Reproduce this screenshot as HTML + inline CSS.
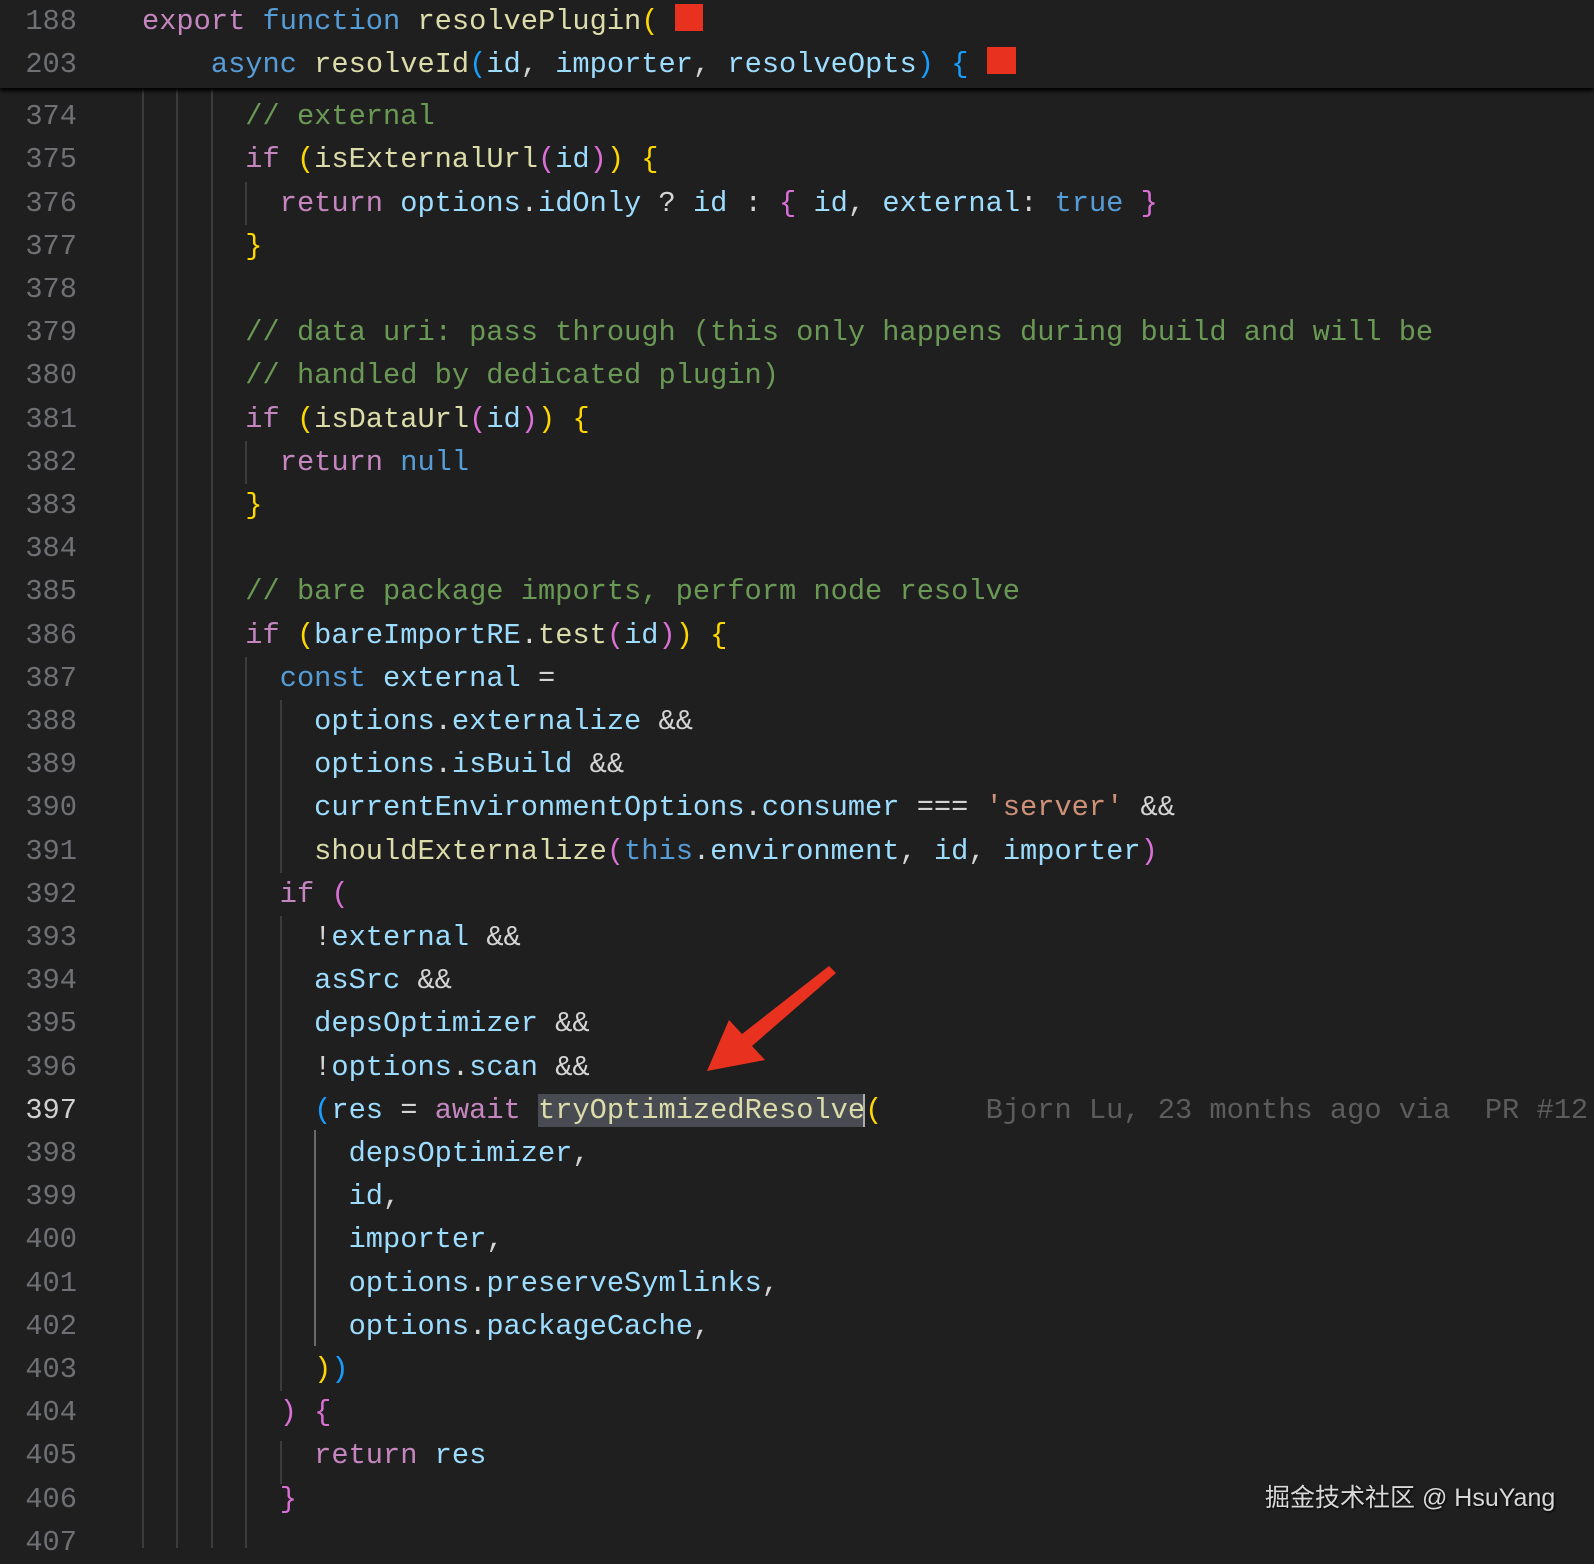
<!DOCTYPE html>
<html><head><meta charset="utf-8"><style>
html,body{margin:0;padding:0;background:#1f1f1f;}
body{width:1594px;height:1548px;position:relative;overflow:hidden;font-family:"Liberation Mono",monospace;font-size:28.7px;}
.l{position:absolute;left:0;height:43.2px;line-height:43.2px;white-space:pre;color:#d4d4d4;}
.n{position:absolute;left:0;width:77px;text-align:right;color:#6e7074;}
.c{position:absolute;left:142px;}
.g{position:absolute;width:2px;background:#3c3c3c;}
.k{color:#c586c0}.b{color:#569cd6}.f{color:#dcdcaa}.v{color:#9cdcfe}.m{color:#6a9955}.s{color:#ce9178}
.y{color:#ffd700}.p{color:#da70d6}.q{color:#179fff}
.hdr{position:absolute;left:0;top:0;width:1594px;height:88px;background:#1f1f1f;box-shadow:0 3px 4px #000;z-index:2;}
.hl{background:#484c52;}
</style></head><body>
<div class="hdr">
<div class="l" style="top:0px"><span class="n">188</span><span class="c"><span class="k">export</span> <span class="b">function</span> <span class="f">resolvePlugin</span><span class="y">(</span></span></div>
<div class="l" style="top:43px"><span class="n">203</span><span class="c">    <span class="b">async</span> <span class="f">resolveId</span><span class="q">(</span><span class="v">id</span>, <span class="v">importer</span>, <span class="v">resolveOpts</span><span class="q">)</span> <span class="q">{</span></span></div>
<div style="position:absolute;left:675px;top:4px;width:28px;height:27px;background:#e8321f"></div>
<div style="position:absolute;left:987px;top:47px;width:29px;height:27px;background:#e8321f"></div>
</div>

<div class="g" style="left:142px;top:88px;height:1460px"></div>
<div class="g" style="left:176px;top:88px;height:1460px"></div>
<div class="g" style="left:211px;top:88px;height:1460px"></div>
<div class="g" style="left:245px;top:182px;height:43px"></div>
<div class="g" style="left:245px;top:441px;height:43px"></div>
<div class="g" style="left:245px;top:657px;height:891px"></div>
<div class="g" style="left:280px;top:700px;height:173px"></div>
<div class="g" style="left:280px;top:916px;height:475px"></div>
<div class="g" style="left:280px;top:1441px;height:43px"></div>
<div class="g" style="left:314px;top:1130px;height:216px;background:#6a6a6a"></div>

<div class="l" style="top:95px"><span class="n">374</span><span class="c">      <span class="m">// external</span></span></div>
<div class="l" style="top:138px"><span class="n">375</span><span class="c">      <span class="k">if</span> <span class="y">(</span><span class="f">isExternalUrl</span><span class="p">(</span><span class="v">id</span><span class="p">)</span><span class="y">)</span> <span class="y">{</span></span></div>
<div class="l" style="top:182px"><span class="n">376</span><span class="c">        <span class="k">return</span> <span class="v">options</span>.<span class="v">idOnly</span> ? <span class="v">id</span> : <span class="p">{</span> <span class="v">id</span>, <span class="v">external</span>: <span class="b">true</span> <span class="p">}</span></span></div>
<div class="l" style="top:225px"><span class="n">377</span><span class="c">      <span class="y">}</span></span></div>
<div class="l" style="top:268px"><span class="n">378</span></div>
<div class="l" style="top:311px"><span class="n">379</span><span class="c">      <span class="m">// data uri: pass through (this only happens during build and will be</span></span></div>
<div class="l" style="top:354px"><span class="n">380</span><span class="c">      <span class="m">// handled by dedicated plugin)</span></span></div>
<div class="l" style="top:398px"><span class="n">381</span><span class="c">      <span class="k">if</span> <span class="y">(</span><span class="f">isDataUrl</span><span class="p">(</span><span class="v">id</span><span class="p">)</span><span class="y">)</span> <span class="y">{</span></span></div>
<div class="l" style="top:441px"><span class="n">382</span><span class="c">        <span class="k">return</span> <span class="b">null</span></span></div>
<div class="l" style="top:484px"><span class="n">383</span><span class="c">      <span class="y">}</span></span></div>
<div class="l" style="top:527px"><span class="n">384</span></div>
<div class="l" style="top:570px"><span class="n">385</span><span class="c">      <span class="m">// bare package imports, perform node resolve</span></span></div>
<div class="l" style="top:614px"><span class="n">386</span><span class="c">      <span class="k">if</span> <span class="y">(</span><span class="v">bareImportRE</span>.<span class="f">test</span><span class="p">(</span><span class="v">id</span><span class="p">)</span><span class="y">)</span> <span class="y">{</span></span></div>
<div class="l" style="top:657px"><span class="n">387</span><span class="c">        <span class="b">const</span> <span class="v">external</span> =</span></div>
<div class="l" style="top:700px"><span class="n">388</span><span class="c">          <span class="v">options</span>.<span class="v">externalize</span> &amp;&amp;</span></div>
<div class="l" style="top:743px"><span class="n">389</span><span class="c">          <span class="v">options</span>.<span class="v">isBuild</span> &amp;&amp;</span></div>
<div class="l" style="top:786px"><span class="n">390</span><span class="c">          <span class="v">currentEnvironmentOptions</span>.<span class="v">consumer</span> === <span class="s">'server'</span> &amp;&amp;</span></div>
<div class="l" style="top:830px"><span class="n">391</span><span class="c">          <span class="f">shouldExternalize</span><span class="p">(</span><span class="b">this</span>.<span class="v">environment</span>, <span class="v">id</span>, <span class="v">importer</span><span class="p">)</span></span></div>
<div class="l" style="top:873px"><span class="n">392</span><span class="c">        <span class="k">if</span> <span class="p">(</span></span></div>
<div class="l" style="top:916px"><span class="n">393</span><span class="c">          !<span class="v">external</span> &amp;&amp;</span></div>
<div class="l" style="top:959px"><span class="n">394</span><span class="c">          <span class="v">asSrc</span> &amp;&amp;</span></div>
<div class="l" style="top:1002px"><span class="n">395</span><span class="c">          <span class="v">depsOptimizer</span> &amp;&amp;</span></div>
<div class="l" style="top:1046px"><span class="n">396</span><span class="c">          !<span class="v">options</span>.<span class="v">scan</span> &amp;&amp;</span></div>
<div class="l" style="top:1089px"><span class="n" style="color:#d0d0d0">397</span><span class="c">          <span class="q">(</span><span class="v">res</span> = <span class="k">await</span> <span class="f hl">tryOptimizedResolve</span><span class="y" style="border-left:2px solid #aeafad;margin-left:-2px">(</span>      <span style="color:#5c5c5c">Bjorn Lu, 23 months ago via  PR #12</span></span></div>
<div class="l" style="top:1132px"><span class="n">398</span><span class="c">            <span class="v">depsOptimizer</span>,</span></div>
<div class="l" style="top:1175px"><span class="n">399</span><span class="c">            <span class="v">id</span>,</span></div>
<div class="l" style="top:1218px"><span class="n">400</span><span class="c">            <span class="v">importer</span>,</span></div>
<div class="l" style="top:1262px"><span class="n">401</span><span class="c">            <span class="v">options</span>.<span class="v">preserveSymlinks</span>,</span></div>
<div class="l" style="top:1305px"><span class="n">402</span><span class="c">            <span class="v">options</span>.<span class="v">packageCache</span>,</span></div>
<div class="l" style="top:1348px"><span class="n">403</span><span class="c">          <span class="y">)</span><span class="q">)</span></span></div>
<div class="l" style="top:1391px"><span class="n">404</span><span class="c">        <span class="p">)</span> <span class="p">{</span></span></div>
<div class="l" style="top:1434px"><span class="n">405</span><span class="c">          <span class="k">return</span> <span class="v">res</span></span></div>
<div class="l" style="top:1478px"><span class="n">406</span><span class="c">        <span class="p">}</span></span></div>
<div class="l" style="top:1521px"><span class="n">407</span></div>

<svg style="position:absolute;left:0;top:0" width="1594" height="1548">
<polygon points="829,966 836,973 752,1046 765,1060 707,1071 729,1020 742,1034" fill="#e8321f"/>
</svg>
<div style="position:absolute;left:1265px;top:1478px;font-family:'Liberation Sans','Noto Sans CJK SC',sans-serif;font-size:25px;color:#d8d8d8;text-shadow:1px 1px 2px #000;">掘金技术社区 @ HsuYang</div>
</body></html>
